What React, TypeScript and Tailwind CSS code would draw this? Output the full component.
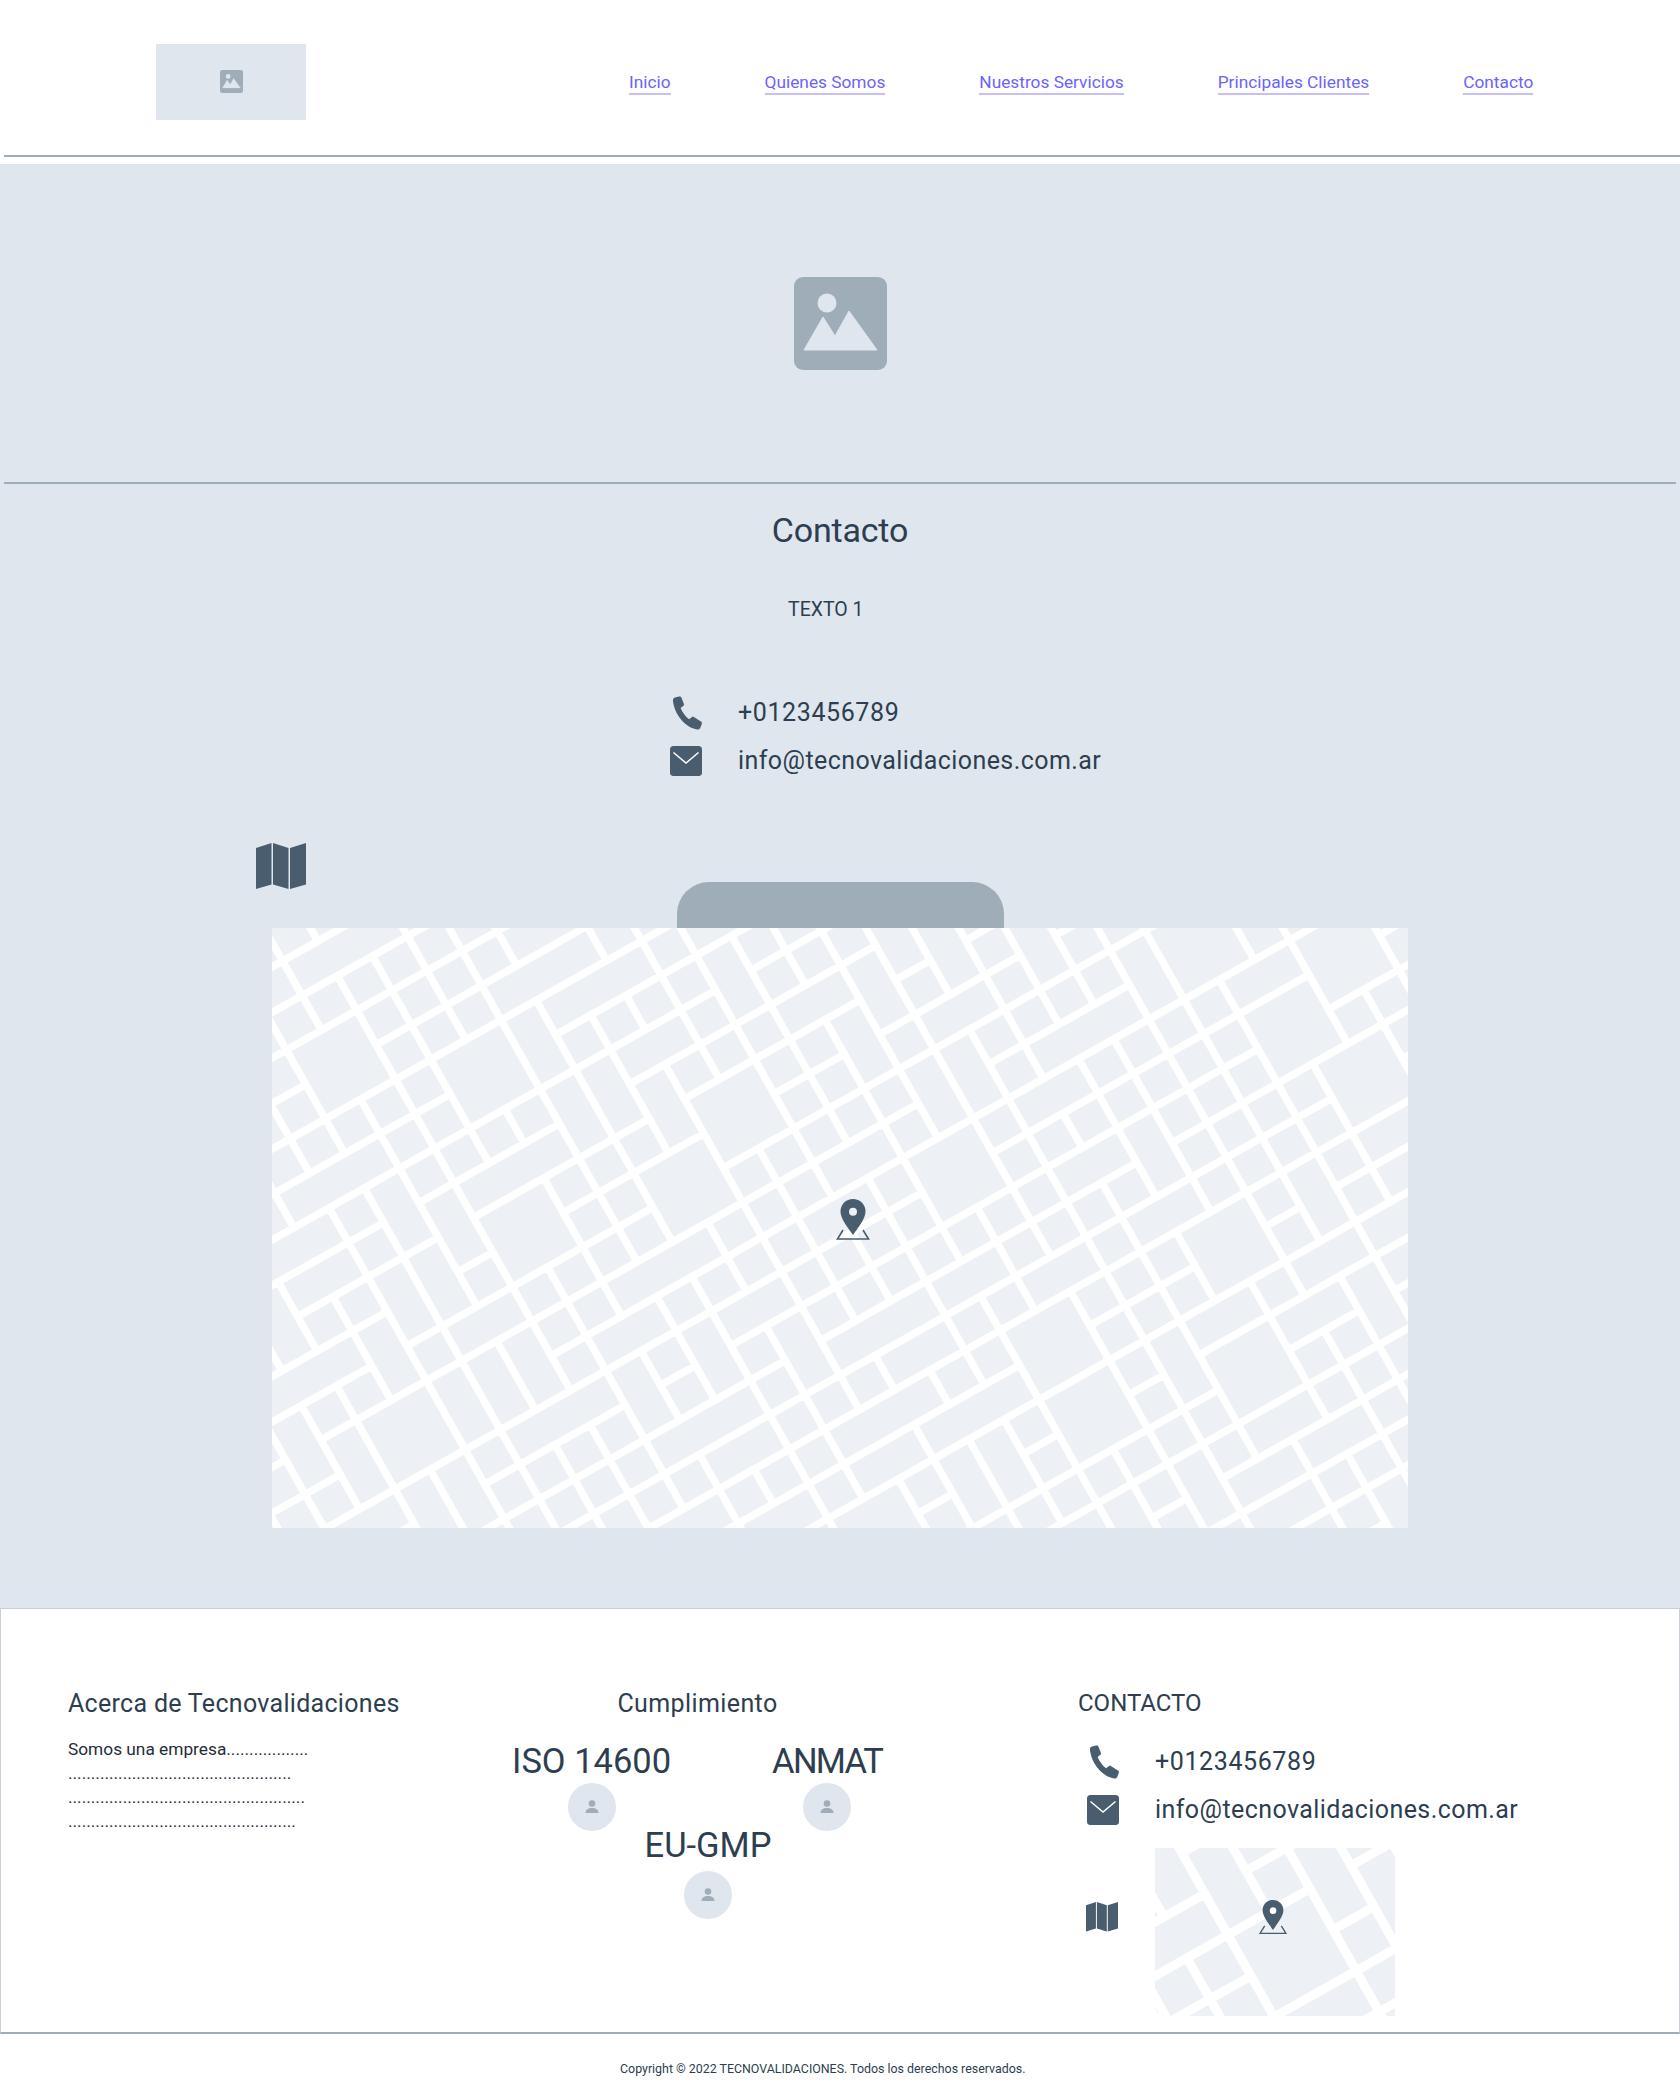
import React from "react";

function rnd(a: number, b: number, s: number) {
  const x = Math.sin(a * 127.1 + b * 311.7 + s * 74.7) * 43758.5453;
  return x - Math.floor(x);
}

const SLOPE = 0.563;

function streets(w: number, h: number, seed: number, stepC: number, stepD: number, c0: number, d0: number) {
  const cs: number[] = [];
  const ds: number[] = [];
  for (let c = c0 - stepC * 2; c < h + SLOPE * w + stepC * 2; c += stepC) cs.push(c);
  for (let d = d0 - stepD * Math.ceil(h / 1.776 / stepD + 2); d < w + stepD * 2; d += stepD) ds.push(d);
  const pt = (ci: number, di: number) => {
    const x = (cs[ci] + 1.776 * ds[di]) / (1.776 + SLOPE);
    return [x, cs[ci] - SLOPE * x];
  };
  const used = new Set<string>();
  const open = new Set<string>();
  const shapes = [
    [1, 1], [1, 1], [1, 1], [1, 1], [1, 1], [1, 1], [1, 1], [1, 1],
    [1, 1], [1, 1], [2, 1], [1, 2], [2, 1], [1, 2], [2, 2], [1, 3],
  ];
  for (let a = 0; a < cs.length - 1; a++) {
    for (let b = 0; b < ds.length - 1; b++) {
      if (used.has(`${a},${b}`)) continue;
      const [ra, rb] = shapes[Math.floor(rnd(a, b, seed) * shapes.length)];
      let ok = true;
      for (let i = 0; i < ra; i++) for (let j = 0; j < rb; j++) if (used.has(`${a + i},${b + j}`)) ok = false;
      const na = ok ? ra : 1;
      const nb = ok ? rb : 1;
      for (let i = 0; i < na; i++) {
        for (let j = 0; j < nb; j++) {
          used.add(`${a + i},${b + j}`);
          if (i > 0) open.add(`A${a + i},${b + j}`);
          if (j > 0) open.add(`B${a + i},${b + j}`);
        }
      }
    }
  }
  let p = "";
  const add = (u: number[], v: number[]) => {
    p += `M${u[0].toFixed(1)} ${u[1].toFixed(1)}L${v[0].toFixed(1)} ${v[1].toFixed(1)}`;
  };
  for (let a = 0; a < cs.length; a++) {
    for (let b = 0; b < ds.length; b++) {
      if (b + 1 < ds.length && !open.has(`A${a},${b}`)) add(pt(a, b), pt(a, b + 1));
      if (a + 1 < cs.length && !open.has(`B${a},${b}`)) add(pt(a, b), pt(a + 1, b));
    }
  }
  return p;
}

function StreetMap(props: { w: number; h: number; seed: number; stepC: number; stepD: number; c0: number; d0: number; stroke: number }) {
  const { w, h, seed, stepC, stepD, c0, d0, stroke } = props;
  return (
    <svg width={w} height={h} viewBox={`0 0 ${w} ${h}`} className="block">
      <path d={streets(w, h, seed, stepC, stepD, c0, d0)} stroke="#ffffff" strokeWidth={stroke} fill="none" strokeLinecap="square" />
    </svg>
  );
}

function Pin({ size = 36 }: { size?: number }) {
  return (
    <svg width={size} height={size * 1.14} viewBox="0 0 36 41" fill="none">
      <path d="M8 31 L2.500 40 H33.500 L28 31" stroke="#4a5d6e" strokeWidth="1.600" fill="none" />
      <path fillRule="evenodd" d="M18 0c7 0 12.500 5.400 12.500 12.400 0 7-7 15.600-12.500 23.600C12.500 28 5.500 19.400 5.500 12.400 5.500 5.400 11 0 18 0zm0 8.800a4 4 0 1 0 0 8 4 4 0 0 0 0-8z" fill="#4a5d6e" />
    </svg>
  );
}

function Phone({ w = 32 }: { w?: number }) {
  return (
    <svg width={w} height={w * 1.06} viewBox="0 0 32 34">
      <path d="M3 1.500 7 .5c1.200-.3 2 .2 2.500 1.200l2.300 6c.4 1 .1 1.800-.7 2.400L8.600 12c1.500 4 4.800 8.500 8.500 11.300l2.600-2c.8-.6 1.600-.6 2.500-.1l6.800 4.300c1 .6 1.200 1.500.8 2.500l-1.400 3.800c-.5 1.300-1.700 2-3 1.800C13.500 32 2 18 .9 4.500.800 3 1.600 1.900 3 1.500z" fill="#4a5d6e" />
    </svg>
  );
}

function Mail({ w = 32 }: { w?: number }) {
  return (
    <svg width={w} height={w * 0.94} viewBox="0 0 32 30">
      <rect width="32" height="30" rx="3.500" fill="#4a5d6e" />
      <path d="M3.500 6.500 16 17 28.500 6.500" stroke="#ffffff" strokeWidth="1.500" fill="none" />
    </svg>
  );
}

function MapIcon({ w = 50 }: { w?: number }) {
  return (
    <svg width={w} height={w * 0.92} viewBox="0 0 50 46" fill="#4a5d6e">
      <path d="M0 5 15.500 0v41.500L0 46z" />
      <path d="M17 0 32.500 5v41L17 41.500z" />
      <path d="M34 5 50 0v41.500L34 46z" />
    </svg>
  );
}

function ImageIcon({ size, fg, bg }: { size: number; fg: string; bg: string }) {
  return (
    <svg width={size} height={size} viewBox="0 0 93 93">
      <rect width="93" height="93" rx="9" fill={fg} />
      <circle cx="33" cy="26" r="9.500" fill={bg} />
      <path d="M10 73 29 40l12 19 14-25 28 39z" fill={bg} stroke={bg} strokeWidth="1" strokeLinejoin="round" />
    </svg>
  );
}

function Person() {
  return (
    <div className="flex h-12 w-12 items-center justify-center rounded-full bg-[#dfe6ee]">
      <svg width="16" height="16" viewBox="0 0 16 16" fill="#9fadb9">
        <circle cx="8" cy="4.500" r="3.300" />
        <path d="M1.500 14c0-3.500 2.700-5 6.500-5s6.500 1.500 6.500 5z" />
      </svg>
    </div>
  );
}

function NavLink({ children }: { children: React.ReactNode }) {
  return (
    <a className="border-b-2 border-[#c6c0f9] text-[17.3px] leading-[22px] text-[#6c63ff]">{children}</a>
  );
}

function ContactRows() {
  return (
    <div className="flex flex-col gap-[16px]">
      <div className="flex h-[32px] items-center">
        <div className="w-[68px] pl-[2px]"><Phone /></div>
        <span className="text-[25px] tracking-[0.6px]">+0123456789</span>
      </div>
      <div className="flex h-[32px] items-center">
        <div className="w-[68px]"><Mail /></div>
        <span className="text-[25px] tracking-[0.42px]">info@tecnovalidaciones.com.ar</span>
      </div>
    </div>
  );
}

export default function App() {
  const font = { fontFamily: "Roboto, 'Liberation Sans', sans-serif" };
  return (
    <div style={font} className="flex h-[2100px] w-[1680px] flex-col bg-white text-[#2d3e50]">
      <header className="flex h-[155px] items-center pl-[156px]">
        <div className="mt-[9px] flex h-[76px] w-[150px] items-center justify-center bg-[#dfe6ee]">
          <div className="-mt-[2px]"><ImageIcon size={23} fg="#9fadb9" bg="#dfe6ee" /></div>
        </div>
        <nav className="ml-[323px] mt-[10px] flex gap-[94px]">
          <NavLink>Inicio</NavLink>
          <NavLink>Quienes Somos</NavLink>
          <NavLink>Nuestros Servicios</NavLink>
          <NavLink>Principales Clientes</NavLink>
          <NavLink>Contacto</NavLink>
        </nav>
      </header>
      <div className="ml-[4px] h-[2px] bg-[#9fadb9]" />
      <main className="mt-[7px] flex h-[1444px] flex-col bg-[#dfe6ee]">
        <section className="mx-[4px] flex h-[320px] items-center justify-center border-b-2 border-[#9fadb9]">
          <ImageIcon size={93} fg="#9fadb9" bg="#dfe6ee" />
        </section>
        <h1 className="mt-[26px] text-center text-[34px] leading-[40px] tracking-[-0.2px]">Contacto</h1>
        <p className="mt-[47px] ml-[788px] text-[19.5px] leading-[26px]">TEXTO 1</p>
        <div className="mt-[74px] ml-[670px]"><ContactRows /></div>
        <div className="mt-[66px] ml-[256px] -mb-[7px]"><MapIcon /></div>
        <div className="mx-auto h-[46px] w-[327px] rounded-t-[32px] bg-[#9fadb9]" />
        <div className="relative mx-auto h-[600px] w-[1136px] overflow-hidden bg-[#edf0f5]">
          <StreetMap w={1136} h={600} seed={5} stepC={45.5} stepD={46.3} c0={39} d0={-8} stroke={7.5} />
          <div className="absolute left-[563px] top-[271px]"><Pin /></div>
        </div>
      </main>
      <footer className="flex h-[426px] border border-b-2 border-[#c5d0da] border-b-[#9fadb9]">
        <div className="w-[511px] pt-[79px] pl-[67px]">
          <h2 className="text-[25px] leading-[32px] tracking-[0.3px]">Acerca de Tecnovalidaciones</h2>
          <div className="mt-[17px] text-[17.3px] leading-[24px] text-[#1f2d3a]">
            <p>Somos una empresa..................</p>
            <p>.................................................</p>
            <p>....................................................</p>
            <p>..................................................</p>
          </div>
        </div>
        <div className="w-[565px] pt-[79px]">
          <div className="w-[371px]">
            <h2 className="text-center text-[25px] leading-[32px] tracking-[0.4px]">Cumplimiento</h2>
            <div className="mt-[19px] flex gap-[101px]">
              <div className="flex flex-col items-center">
                <div className="text-[34.5px] leading-[44px] whitespace-nowrap">ISO 14600</div>
                <Person />
              </div>
              <div className="flex flex-col items-center">
                <div className="text-[34.5px] leading-[44px] tracking-[-1.7px] whitespace-nowrap">ANMAT</div>
                <Person />
              </div>
            </div>
            <div className="mt-[-8px] flex justify-center pl-[21px]">
              <div className="flex flex-col items-center">
                <div className="mb-[4px] text-[34.5px] leading-[44px] whitespace-nowrap">EU-GMP</div>
                <Person />
              </div>
            </div>
          </div>
        </div>
        <div className="flex-1 pt-[78px]">
          <h2 className="ml-[1px] text-[24px] leading-[32px]">CONTACTO</h2>
          <div className="ml-[10px] mt-[27px]"><ContactRows /></div>
          <div className="ml-[9px] mt-[22px] flex items-center">
            <div className="mb-[30px] w-[69px]"><MapIcon w={32} /></div>
            <div className="relative h-[168px] w-[240px] overflow-hidden rounded-bl-[10px] bg-[#edf0f5]">
              <StreetMap w={240} h={168} seed={23} stepC={54} stepD={54} c0={20} d0={24} stroke={9} />
              <div className="absolute left-[103px] top-[52px]"><Pin size={30} /></div>
            </div>
          </div>
        </div>
      </footer>
      <p className="mt-[26px] ml-[620px] text-[12.4px] leading-[18px]">Copyright © 2022 TECNOVALIDACIONES. Todos los derechos reservados.</p>
    </div>
  );
}
